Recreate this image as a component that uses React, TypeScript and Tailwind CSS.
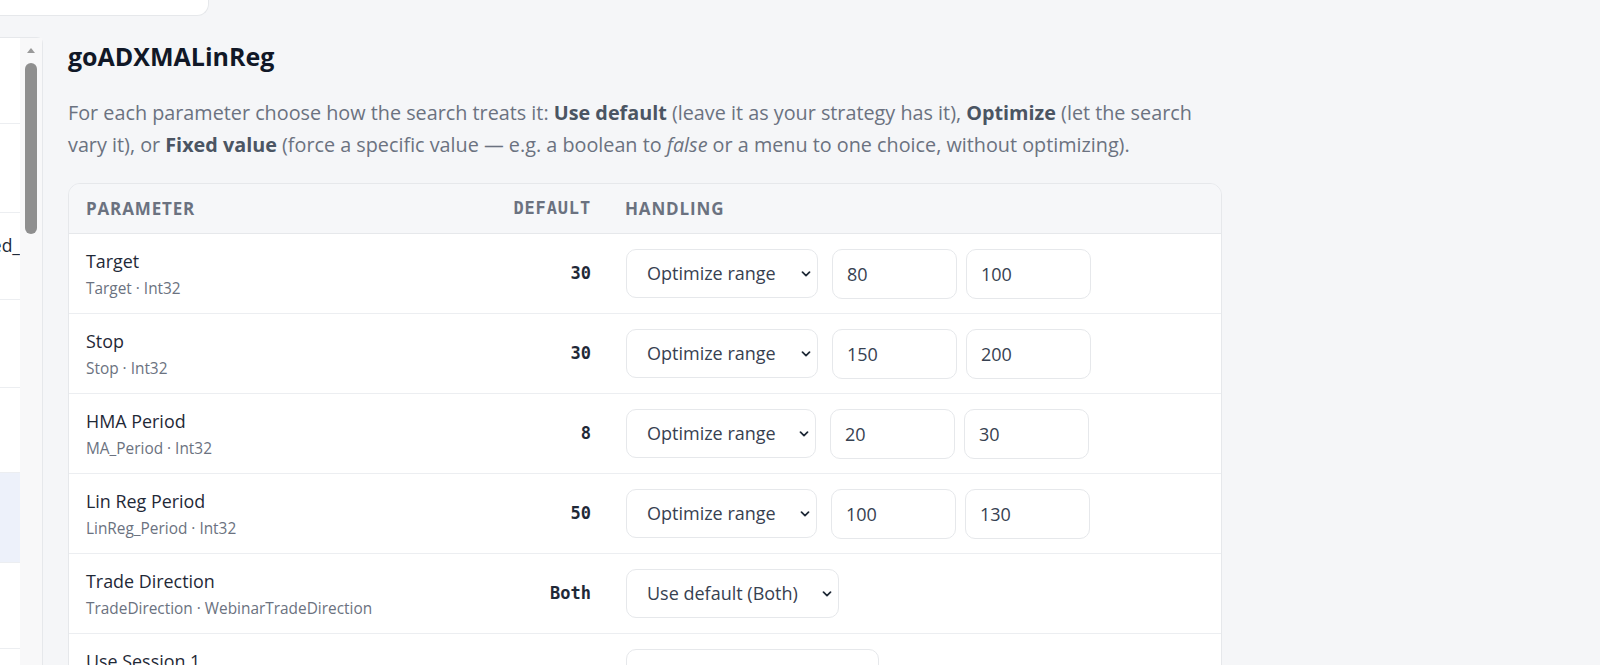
import React from 'react';

type Param = {
  label: string;
  meta: string;
  fallback: string;
  mode: string;
  selectW: string;
  range?: [string, string];
};

const params: Param[] = [
  { label: 'Target', meta: 'Target · Int32', fallback: '30', mode: 'Optimize range', selectW: 'w-[192px]', range: ['80', '100'] },
  { label: 'Stop', meta: 'Stop · Int32', fallback: '30', mode: 'Optimize range', selectW: 'w-[192px]', range: ['150', '200'] },
  { label: 'HMA Period', meta: 'MA_Period · Int32', fallback: '8', mode: 'Optimize range', selectW: 'w-[190px]', range: ['20', '30'] },
  { label: 'Lin Reg Period', meta: 'LinReg_Period · Int32', fallback: '50', mode: 'Optimize range', selectW: 'w-[191px]', range: ['100', '130'] },
  { label: 'Trade Direction', meta: 'TradeDirection · WebinarTradeDirection', fallback: 'Both', mode: 'Use default (Both)', selectW: 'w-[213px]' },
  { label: 'Use Session 1', meta: 'UseSession1 · Boolean', fallback: 'True', mode: 'Use default (True)', selectW: 'w-[253px]' },
];

// strategy list on the left, only its right edge is in view
const strategies = [
  { h: 'h-[86px]', name: '', active: false },
  { h: 'h-[89px]', name: '', active: false },
  { h: 'h-[87px]', name: 'goADXMALinReg_Optimized_', active: false },
  { h: 'h-[88px]', name: '', active: false },
  { h: 'h-[85px]', name: '', active: false },
  { h: 'h-[90px]', name: '', active: true },
  { h: 'h-[86px]', name: '', active: false },
];

const Chevron = () => (
  <svg
    className="pointer-events-none absolute right-[7px] top-1/2 -translate-y-1/2"
    width="10"
    height="6"
    viewBox="0 0 10 6"
    fill="none"
  >
    <path d="M1.5 1.2 5 4.7 8.5 1.2" stroke="#1f2937" strokeWidth="1.7" strokeLinecap="round" strokeLinejoin="round" />
  </svg>
);

const ModeSelect = ({ value, fallback, width }: { value: string; fallback: string; width: string }) => (
  <div className={`relative shrink-0 ${width}`}>
    <select
      defaultValue={value}
      className="h-[49px] w-full appearance-none rounded-[10px] border border-[#e6e8eb] bg-white pl-[20px] pr-8 text-[18px] text-[#374151] outline-none"
    >
      <option>{`Use default (${fallback})`}</option>
      <option>Optimize range</option>
      <option>Fixed value</option>
    </select>
    <Chevron />
  </div>
);

const RangeInput = ({ value, className }: { value: string; className: string }) => (
  <input
    readOnly
    value={value}
    className={`h-[50px] w-[125px] shrink-0 rounded-[10px] border border-[#e6e8eb] bg-white px-[14px] text-[18px] text-[#374151] outline-none ${className}`}
  />
);

const ParamRow = ({ p }: { p: Param }) => (
  <div className="grid h-[80px] grid-cols-[419px_120px_1fr] border-b border-[#eceef1] bg-white">
    <div className="flex flex-col justify-center pl-[17px]">
      <div className="text-[17.9px] leading-[26px] text-[#1f2937]">{p.label}</div>
      <div className="mt-[4px] text-[15.4px] leading-[22px] text-[#6b7280]">{p.meta}</div>
    </div>
    <div className="flex items-center justify-end pr-[17px] font-['DejaVu_Sans_Mono',monospace] text-[17px] font-semibold text-[#1f2937]">
      {p.fallback}
    </div>
    <div className="flex items-center pl-[18px]">
      <ModeSelect value={p.mode} fallback={p.fallback} width={p.selectW} />
      {p.range && (
        <>
          <RangeInput value={p.range[0]} className="ml-[14px]" />
          <RangeInput value={p.range[1]} className="ml-[9px]" />
        </>
      )}
    </div>
  </div>
);

export default function App() {
  return (
    <div className="h-[665px] w-full overflow-hidden bg-[#f5f6f8] font-['Open_Sans',sans-serif]">
      {/* search box bottom edge */}
      <div className="h-[37px]">
        <div className="h-[16px] w-[209px] rounded-br-xl border-b border-r border-[#e6e8eb] bg-white" />
      </div>

      <div className="flex h-[628px]">
        <aside className="flex w-[43px] shrink-0 rounded-tr-md border-r border-t border-[#e6e8eb] bg-white">
          <div className="w-[20px] overflow-hidden">
            {strategies.map((s, i) => (
              <div
                key={i}
                className={`${s.h} flex justify-end overflow-hidden border-b border-[#eceef1] ${s.active ? 'bg-[#edf1fa]' : 'bg-white'}`}
              >
                {s.name && (
                  <span className="mt-[20px] whitespace-nowrap text-[17.5px] leading-6 text-[#1f2937]">{s.name}</span>
                )}
              </div>
            ))}
          </div>
          <div className="flex w-[22px] flex-col items-center bg-[#f8f8f9]">
            <div className="mt-[10px] h-0 w-0 border-x-[4px] border-b-[5px] border-x-transparent border-b-[#9a9a9a]" />
            <div className="mt-[10px] h-[171px] w-[12px] rounded-full bg-[#8f8f8f]" />
          </div>
        </aside>

        <main className="flex-1 pl-[25px] pt-[3px]">
          <h1 className="text-[25px] font-bold leading-[32px] text-[#111827]">goADXMALinReg</h1>

          <p className="mt-[25px] whitespace-nowrap text-[19.8px] leading-[32px] text-[#6b7280]">
            For each parameter choose how the search treats it: <b className="font-bold text-[#4b5563]">Use default</b> (leave it as
            your strategy has it), <b className="font-bold text-[#4b5563]">Optimize</b> (let the search
            <br />
            vary it), or <b className="font-bold text-[#4b5563]">Fixed value</b> (force a specific value — e.g. a boolean to{' '}
            <i>false</i> or a menu to one choice, without optimizing).
          </p>

          <div className="mt-[22px] w-[1154px] overflow-hidden rounded-xl border border-[#e6e8eb]">
            <div className="grid h-[50px] grid-cols-[419px_120px_1fr] items-center border-b border-[#e6e8eb] bg-[#f6f7f9] text-[17px] font-bold uppercase tracking-[0.05em] text-[#6b7280]">
              <div className="pl-[17px]">Parameter</div>
              <div className="pr-[17px] text-right font-['DejaVu_Sans_Mono',monospace]">Default</div>
              <div className="pl-[17px]">Handling</div>
            </div>
            {params.map((p) => (
              <ParamRow key={p.label} p={p} />
            ))}
          </div>
        </main>
      </div>
    </div>
  );
}
